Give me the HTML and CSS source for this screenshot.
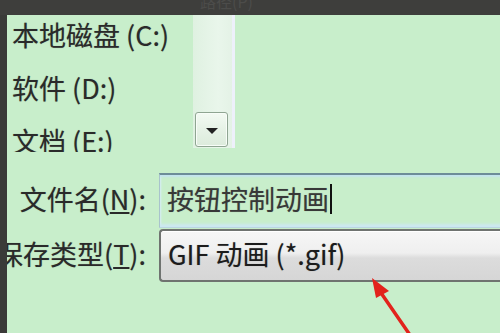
FILE: index.html
```html
<!DOCTYPE html>
<html lang="zh-CN">
<head>
	<meta charset="UTF-8">
	<title>另存为</title>
<link rel="stylesheet" href="styles.css">
</head>
<body>
	<div class="topbar"><span class="path">路径(P)</span></div>
	<div class="main">
		<div class="edge"></div>
		<div class="dialog">
			<div class="browser">
				<div class="list">
					<div class="item">本地磁盘 (C:)</div>
					<div class="item">软件 (D:)</div>
					<div class="item">文档 (E:)</div>
				</div>
				<div class="scroll">
					<div class="down"><span class="tri"></span></div>
				</div>
			</div>
			<div class="row row_name">
				<div class="label">文件名(<u>N</u>):</div>
				<div class="field">按钮控制动画<span class="caret"></span></div>
			</div>
			<div class="row row_type">
				<div class="label">保存类型(<u>T</u>):</div>
				<div class="combo">GIF 动画 (*.gif)</div>
			</div>
		</div>
	</div>
	<svg class="arrow" width="500" height="333" viewBox="0 0 500 333">
		<line x1="410" y1="335" x2="379" y2="290" stroke="#e2231c" stroke-width="3.5" stroke-linecap="round"/>
		<polygon points="372,278 376,298 389,291" fill="#e2231c"/>
	</svg>
</body>
</html>
```

FILE: styles.css
```css
*{
	box-sizing: border-box;
}
html,body{
	margin: 0;
	width: 500px;
	height: 333px;
	overflow: hidden;
	background: #3c3c3a;
	font-family: "Noto Sans CJK SC", "Noto Sans", sans-serif;
}
u{
	text-decoration: underline;
	text-underline-offset: 2px;
}
.topbar{
	height: 15px;
	background: #3e3e3c;
	position: relative;
	overflow: hidden;
}
.path{
	position: absolute;
	left: 200px;
	top: -11px;
	font-size: 16px;
	color: #4c4c4a;
}
.main{
	display: flex;
	height: 318px;
}
.edge{
	width: 7px;
	background: #3a3a38;
}
.dialog{
	flex: 1;
	background: #c8eecb;
	overflow: hidden;
	display: flex;
	flex-direction: column;
}
.browser{
	display: flex;
	height: 137px;
}
.list{
	width: 186px;
	padding: 0 0 0 5px;
	overflow: hidden;
	display: flex;
	flex-direction: column;
	gap: 13px;
}
.item{
	line-height: 40px;
	font-size: 27px;
	color: #2a2a2a;
	white-space: nowrap;
	text-shadow: 0 0 1px rgba(0,0,0,.3);
}
.scroll{
	width: 42px;
	height: 133px;
	background: linear-gradient(90deg, #dff1e1 0%, #e9f6eb 60%, #e4f2e6 92%, #eef0fb 93%, #eef0fb 100%);
	display: flex;
	flex-direction: column;
	justify-content: flex-end;
	padding: 0 7px 1px 2px;
}
.down{
	height: 35px;
	border: 1px solid #8fa592;
	border-radius: 3px;
	background: linear-gradient(180deg, #f3faf3 0%, #e6f2e6 50%, #dcebdc 100%);
	box-shadow: inset 0 0 0 1px #f8fdf8;
	display: flex;
	align-items: center;
	justify-content: center;
}
.tri{
	width: 0;
	height: 0;
	border-left: 6px solid transparent;
	border-right: 6px solid transparent;
	border-top: 6px solid #222;
	margin-top: 2px;
}
.row{
	display: flex;
	align-items: center;
	gap: 13px;
	font-size: 27px;
	color: #2a2a2a;
	text-shadow: 0 0 1px rgba(0,0,0,.3);
}
.row_name{
	margin-top: 21px;
	height: 55px;
}
.row_type{
	margin-top: 1px;
	height: 53px;
}
.label{
	width: 139px;
	flex: none;
	display: flex;
	justify-content: flex-end;
	white-space: nowrap;
	padding-bottom: 5px;
}
.field{
	width: 360px;
	flex: none;
	height: 55px;
	border-top: 2px solid #6d8c98;
	border-left: 1px solid #a9c3cc;
	border-bottom: 1px solid #b9d6e0;
	box-shadow: inset 0 3px 2px -1px #c4e3f0, inset 0 -4px 3px -1px #cde8f1, inset 2px 0 2px -1px #d9eef5;
	padding: 0 0 5px 7px;
	display: flex;
	align-items: center;
	color: #383838;
	white-space: nowrap;
}
.caret{
	display: inline-block;
	width: 2px;
	height: 30px;
	background: #111;
	margin-left: 1px;
}
.combo{
	width: 360px;
	flex: none;
	height: 53px;
	border: 2px solid #6f7370;
	border-right: none;
	border-radius: 4px 0 0 4px;
	background: linear-gradient(180deg, #f6f6f6 0%, #efefef 45%, #dcdcdc 55%, #d6d6d6 100%);
	box-shadow: inset 0 1px 0 #fff;
	padding: 0 0 5px 7px;
	display: flex;
	align-items: center;
	color: #1c1c1c;
	white-space: nowrap;
}
.arrow{
	position: absolute;
	left: 0;
	top: 0;
	pointer-events: none;
}
```
